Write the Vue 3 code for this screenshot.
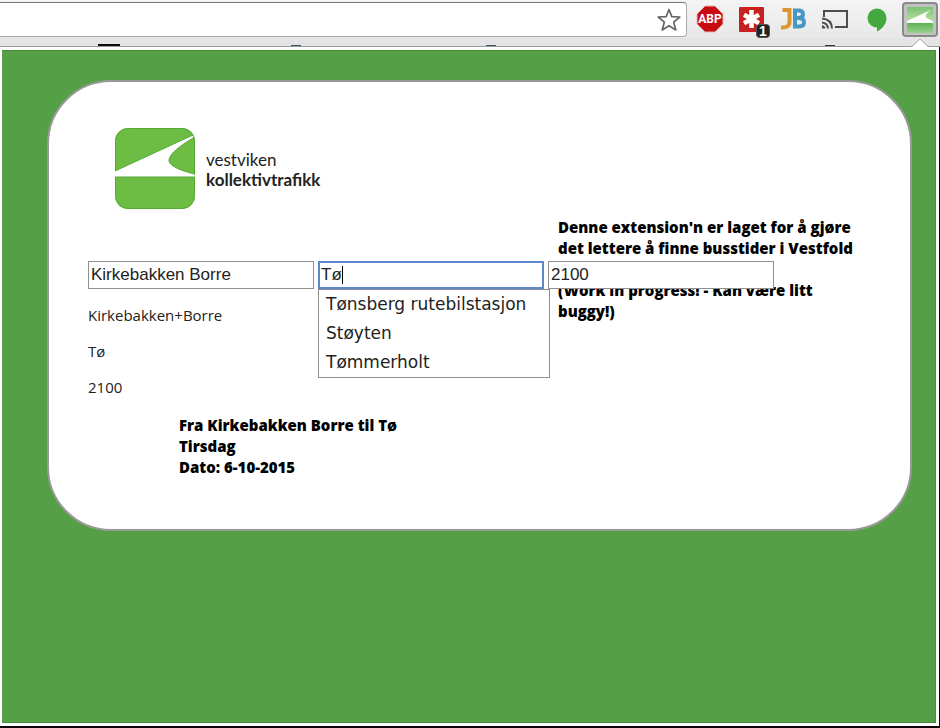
<script setup>
import { ref } from 'vue'

const from = ref('Kirkebakken Borre')
const to = ref('Tø')
const time = ref('2100')
const address = ref('')
const suggestions = ['Tønsberg rutebilstasjon', 'Støyten', 'Tømmerholt']
</script>

<template>
  <div class="window">
    <header class="toolbar">
      <div class="omnibox">
        <input v-model="address" class="address" type="text" aria-label="Address" />
        <button class="star" type="button" aria-label="Bookmark">
          <svg width="26" height="26" viewBox="0 0 26 26">
            <path d="M13 2.5 L15.8 9.6 L23.8 10 L17.7 15.2 L19.8 23 L13 18.7 L6.2 23 L8.3 15.2 L2.2 10 L10.2 9.6 Z" fill="#fff" stroke="#666" stroke-width="1.7" stroke-linejoin="round" />
          </svg>
        </button>
      </div>
      <nav class="extensions" aria-label="Extensions">
        <button type="button" class="ext" aria-label="Adblock Plus">
          <svg width="36" height="38" viewBox="0 0 36 38">
            <path d="M13 6 H23 L31 14 V24 L23 32 H13 L5 24 V14 Z" fill="#c70d12" stroke="#e5b5b2" stroke-width="1" />
            <text x="18" y="23" text-anchor="middle" class="abp">ABP</text>
          </svg>
        </button>
        <button type="button" class="ext" aria-label="LastPass, 1">
          <svg width="36" height="38" viewBox="0 0 36 38">
            <rect x="5" y="7" width="25" height="25" rx="1" fill="#c92020" />
            <path d="M17.5 10 V28 M10 14.700 L25 23.300 M25 14.700 L10 23.300" stroke="#fff" stroke-width="4.500" />
            <rect x="22.500" y="24.500" width="13" height="13" rx="3" fill="#222" stroke="#555" />
            <text x="29" y="36" text-anchor="middle" class="count">1</text>
          </svg>
        </button>
        <button type="button" class="ext" aria-label="JB">
          <svg width="36" height="38" viewBox="0 0 36 38">
            <path d="M6.500 10 H13.500 V22 Q13.500 28 5 27.500" fill="none" stroke="#dc962e" stroke-width="4" />
            <path d="M18 10.500 H22.500 Q27 10.500 27 14.300 Q27 18 22 18 H19 M22 18 Q28 18 28 22.300 Q28 26.500 23 26.500 H18 M19 8.500 V28.500" fill="none" stroke="#4799c3" stroke-width="4" />
          </svg>
        </button>
        <button type="button" class="ext" aria-label="Cast">
          <svg width="36" height="38" viewBox="0 0 36 38">
            <path d="M6 17 V11 H29 V27 H17" fill="none" stroke="#4d4d4d" stroke-width="2" />
            <path d="M4 18.500 Q13.500 19 14 28.500 M4 22.500 Q9.500 23 10 28.500" fill="none" stroke="#4d4d4d" stroke-width="2" />
            <path d="M4 25 Q7 25.500 7.500 28.500 H4 Z" fill="#4d4d4d" />
          </svg>
        </button>
        <button type="button" class="ext" aria-label="Hangouts">
          <svg width="36" height="38" viewBox="0 0 36 38">
            <path d="M17 8.500 A9.500 9.500 0 0 1 26.500 18 C26.500 24 22 29 17 31.500 V27.500 A9.500 9.500 0 0 1 17 8.500 Z" fill="#43a83e" />
          </svg>
        </button>
        <button type="button" class="ext active" aria-label="Vestviken kollektivtrafikk">
          <svg width="26" height="26" viewBox="0 0 26 26">
            <defs>
              <linearGradient id="mini" x1="0" y1="0" x2="0" y2="1">
                <stop offset="0" stop-color="#7dc275" />
                <stop offset="0.5" stop-color="#b0dc9e" />
                <stop offset="0.55" stop-color="#55ad45" />
                <stop offset="1" stop-color="#9bd092" />
              </linearGradient>
            </defs>
            <rect width="26" height="26" rx="1" fill="url(#mini)" />
            <path d="M0 14 L25 2.500 C16 8 17 11 26 14 V16 H0 Z" fill="#fff" />
          </svg>
        </button>
      </nav>
    </header>

    <div class="bookmarks" aria-hidden="true">
      <i class="mark wide"></i>
      <i class="mark second"></i>
      <i class="mark third"></i>
      <i class="mark fourth"></i>
      <svg class="pointer" width="18" height="10" viewBox="0 0 18 10">
        <path d="M0 10 L9 1 L18 10 Z" fill="#fff" />
        <path d="M0 9 L9 1 L18 9" fill="none" stroke="#aaa" stroke-width="1" />
      </svg>
    </div>

    <div class="frame">
      <main class="popup">
        <section class="card">
          <div class="logo">
            <svg width="80" height="81" viewBox="0 0 80 81">
              <defs>
                <clipPath id="tile"><rect x="0" y="0" width="80" height="81" rx="13" /></clipPath>
              </defs>
              <g clip-path="url(#tile)">
                <rect width="80" height="81" fill="#6dbd45" />
                <path d="M0 43 L78 7 L80 9 C61 20 54 27 54 33 C55 38 66 43 80 46 V49 H0 Z" fill="#fff" />
                <path d="M0 43 L78 7 M80 9 C61 20 54 27 54 33 C55 38 66 43 80 46 M0 49 H80" fill="none" stroke="#55a936" stroke-width="1" />
              </g>
              <rect x="0.500" y="0.500" width="79" height="80" rx="13" fill="none" stroke="#55a936" />
              <path d="M0 43 V48.500 M80 47 V48.500" stroke="#fff" stroke-width="3" />
            </svg>
            <p class="brand">vestviken<br /><b>kollektivtrafikk</b></p>
          </div>

          <p class="note">
            Denne extension'n er laget for å gjøre det lettere å finne busstider i Vestfold<br /><br />
            (Work in progress! - Kan være litt buggy!)
          </p>

          <form class="search" @submit.prevent>
            <input v-model="from" class="field" type="text" aria-label="Fra" />
            <div class="combo">
              <input v-model="to" class="field focused" type="text" aria-label="Til" />
              <span class="caret"></span>
              <ul class="menu">
                <li v-for="s in suggestions" :key="s">{{ s }}</li>
              </ul>
            </div>
            <input v-model="time" class="field" type="text" aria-label="Tid" />
          </form>

          <div class="output">
            <p>{{ from.replace(' ', '+') }}</p>
            <p>{{ to }}</p>
            <p>{{ time }}</p>
          </div>

          <p class="summary">
            Fra {{ from }} til {{ to }}<br />Tirsdag<br />Dato: 6-10-2015
          </p>
        </section>
      </main>
    </div>
  </div>
</template>

<style>
body {
  margin: 0;
  background: #0c0408;
}
</style>

<style scoped>
* {
  box-sizing: border-box;
}
p,
ul {
  margin: 0;
  padding: 0;
}
button {
  padding: 0;
  border: 0;
  background: none;
}
.window {
  display: flex;
  flex-direction: column;
  min-height: 100vh;
  padding-bottom: 2px;
  font-family: "Open Sans", "Noto Sans", sans-serif;
  color: #222;
}
.toolbar {
  display: flex;
  height: 38px;
  background: linear-gradient(#f4f4f4, #e8e8e8);
}
.omnibox {
  display: flex;
  flex: 1;
  align-items: center;
  height: 35px;
  margin-top: 2px;
  padding-right: 4px;
  border: 1px solid #aaa;
  border-top-color: #777;
  border-left: 0;
  border-radius: 0 4px 4px 0;
  background: #fff;
}
.address {
  flex: 1;
  min-width: 0;
  height: 28px;
  border: 0;
  outline: 0;
  background: none;
  font: 16px "Liberation Sans", sans-serif;
}
.star,
.star svg,
.ext svg {
  display: block;
}
.extensions {
  display: flex;
  gap: 6px;
  padding: 0 2px 0 5px;
}
.ext {
  width: 36px;
  height: 38px;
}
.active {
  display: grid;
  place-items: center;
  height: 35px;
  margin-top: 2px;
  border: 2px solid #8a8a8a;
  border-radius: 4px;
  background: #c2c2c2;
}
.abp {
  font: bold 12px "Roboto", sans-serif;
  fill: #fff;
}
.count {
  font: bold 14px "Liberation Sans", sans-serif;
  fill: #fff;
}
.bookmarks {
  position: relative;
  height: 9px;
  border-bottom: 1px solid #999;
  background: #e4e4e4;
}
.mark {
  position: absolute;
  bottom: 0;
  left: 486px;
  width: 10px;
  height: 1px;
  background: #356;
}
.wide {
  left: 98px;
  width: 22px;
  height: 2px;
  background: #100b04;
}
.second {
  left: 291px;
}
.fourth {
  left: 825px;
  background: #333;
}
.pointer {
  position: absolute;
  right: 11px;
  bottom: -2px;
}
.frame {
  display: flex;
  flex: 1;
  margin-right: 1px;
  padding: 3px 3px 3px 2px;
  background: #fff;
}
.popup {
  flex: 1;
  padding: 29px 23px 30px 45px;
  border: 1px solid #478c38;
  border-left: 0;
  background: #55a046;
}
.card {
  display: grid;
  grid-template-columns: 470px 1fr;
  grid-template-rows: 179px auto auto auto;
  padding: 0 38px 51px 39px;
  border: 2px solid #999;
  border-radius: 64px;
  background: #fff;
}
.logo {
  display: flex;
  grid-area: 1 / 1;
  gap: 11px;
  padding: 46px 0 0 27px;
}
.brand {
  padding-top: 22px;
  font: 17px/20px "Lato", sans-serif;
}
.note {
  grid-area: 1 / 2 / 4 / 3;
  padding-top: 135px;
  font-size: 15px;
  font-weight: 800;
  line-height: 21px;
  color: #000;
}
.search {
  position: relative;
  display: flex;
  grid-area: 2 / 1 / 3 / 3;
  gap: 4px;
  z-index: 1;
}
.field {
  display: block;
  width: 226px;
  height: 28px;
  padding: 0 2px;
  border: 1px solid #8f8f8f;
  border-radius: 0;
  outline: 0;
  background: #fff;
  font: 17px "Liberation Sans", sans-serif;
  color: #222;
}
.focused {
  border: 2px solid #5d86cc;
  padding: 0 1px;
}
.combo {
  position: relative;
}
.caret {
  position: absolute;
  top: 5px;
  left: 24px;
  width: 1px;
  height: 18px;
  background: #000;
}
.menu {
  position: absolute;
  top: 28px;
  left: 0;
  width: 232px;
  border: 1px solid #8f8f8f;
  background: #fff;
  list-style: none;
  font: 17px/29px "DejaVu Sans", sans-serif;
}
.menu li {
  padding: 0 7px;
}
.output {
  display: grid;
  grid-area: 3 / 1;
  gap: 15px;
  padding-top: 16px;
  font-size: 15px;
  line-height: 21px;
}
.summary {
  grid-area: 4 / 1 / 5 / 3;
  padding: 17px 0 0 91px;
  font-size: 15px;
  font-weight: 800;
  line-height: 21px;
  color: #000;
}
</style>
